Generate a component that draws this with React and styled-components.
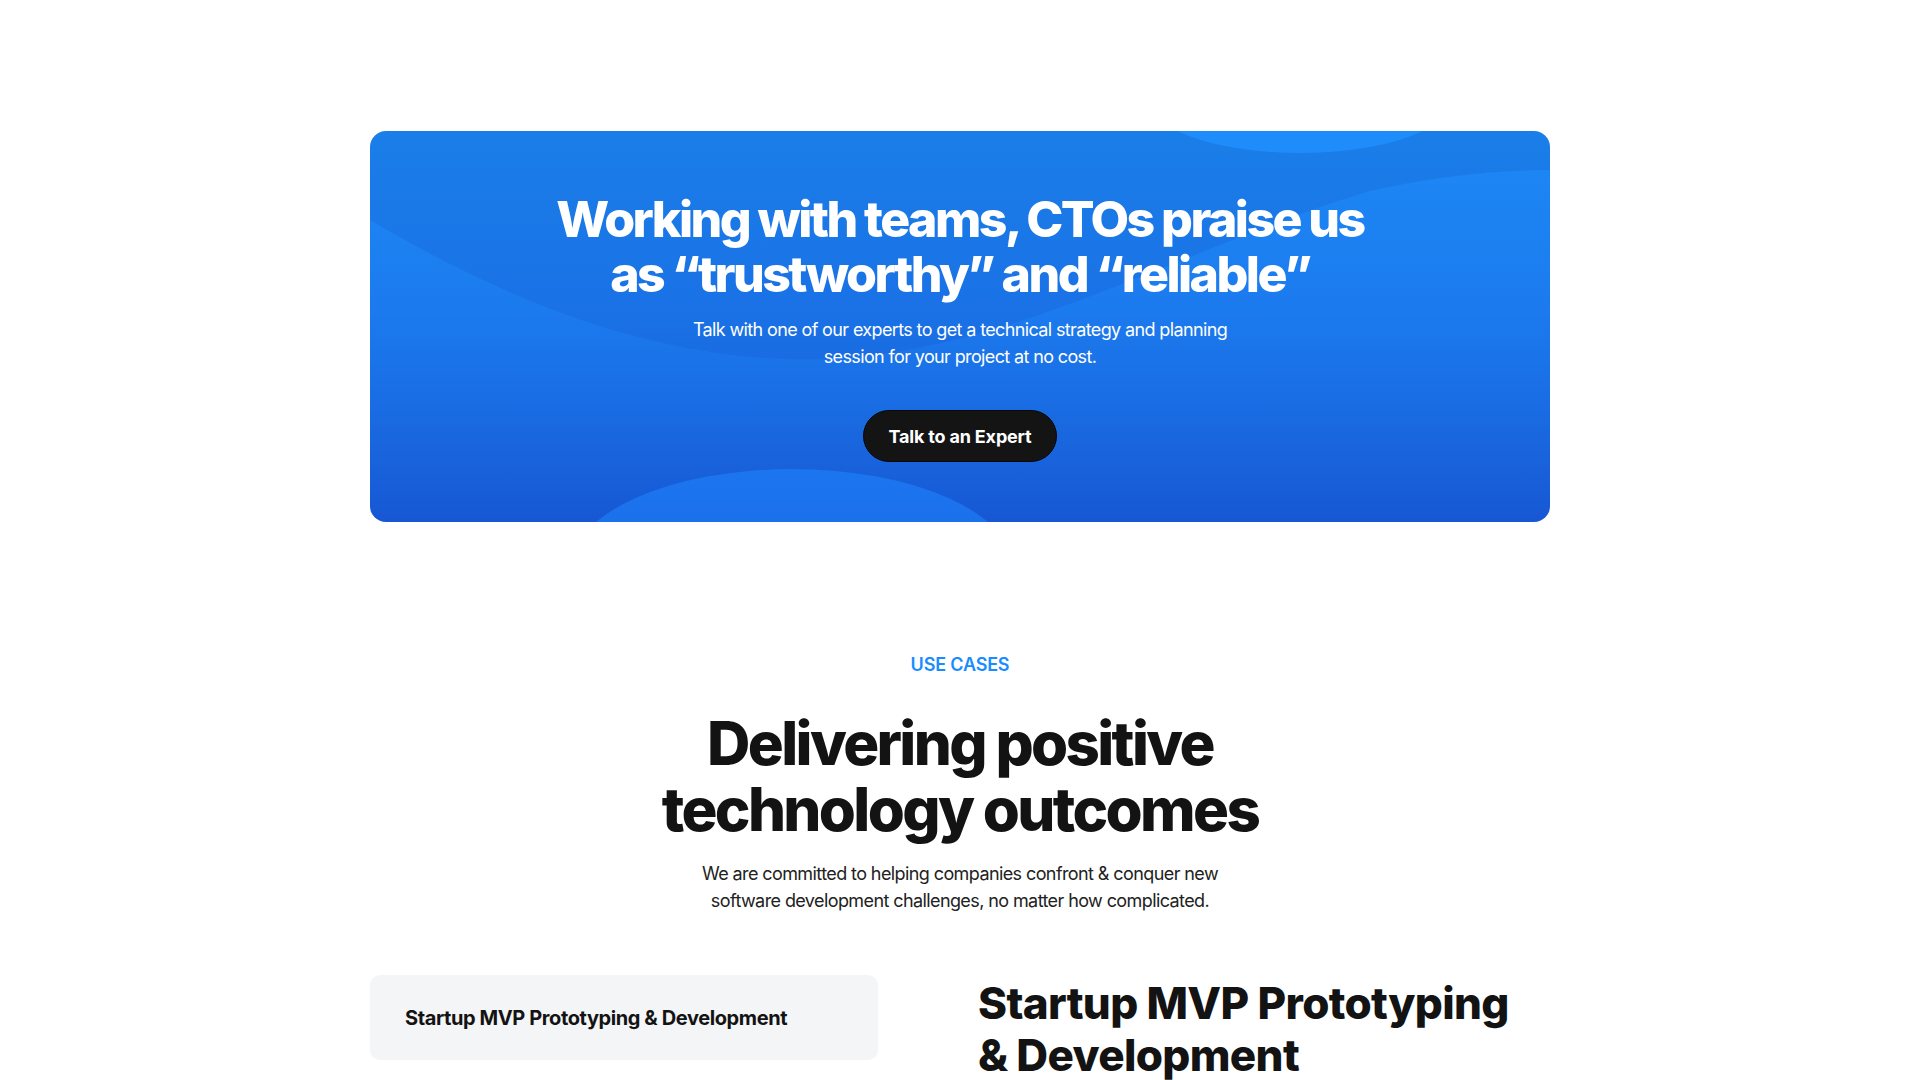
import React from 'react';
import styled, { createGlobalStyle } from 'styled-components';

const GlobalStyle = createGlobalStyle`
  * {
    box-sizing: border-box;
  }

  body {
    margin: 0;
    background: #ffffff;
    font-family: Inter, 'Noto Sans', 'Liberation Sans', sans-serif;
    color: #131313;
    -webkit-font-smoothing: antialiased;
  }
`;

const StyledPage = styled.main`
  display: flex;
  flex-direction: column;
  align-items: center;
  padding: 131px 0 0;
`;

const StyledBanner = styled.section`
  position: relative;
  overflow: hidden;
  width: 1180px;
  border-radius: 16px;
  background: linear-gradient(180deg, #1a7ee8 0%, #1a72e6 45%, #1757d4 100%);
  padding: 61px 0 60px;
  display: flex;
  flex-direction: column;
  align-items: center;
  text-align: center;
`;

const StyledWaves = styled.svg`
  position: absolute;
  inset: 0;
  width: 100%;
  height: 100%;
  pointer-events: none;
`;

const StyledBannerContent = styled.div`
  position: relative;
  display: flex;
  flex-direction: column;
  align-items: center;
`;

const StyledBannerTitle = styled.h2`
  margin: 0;
  font-size: 50px;
  line-height: 55px;
  font-weight: 800;
  letter-spacing: -0.051em;
  color: #ffffff;
  max-width: 840px;
`;

const StyledBannerText = styled.p`
  margin: 14px 0 0;
  max-width: 548px;
  font-size: 18px;
  line-height: 27px;
  font-weight: 400;
  letter-spacing: -0.035em;
  color: #ffffff;
`;

const StyledButton = styled.button`
  margin-top: 40px;
  height: 52px;
  padding: 0 24px;
  border-radius: 26px;
  border: 1px solid #060606;
  background: #141414;
  color: #ffffff;
  font-family: inherit;
  font-size: 18px;
  font-weight: 700;
  letter-spacing: -0.01em;
  cursor: pointer;
`;

const StyledUseCases = styled.section`
  width: 1180px;
  margin-top: 129px;
  display: flex;
  flex-direction: column;
  align-items: center;
  text-align: center;
`;

const StyledEyebrow = styled.span`
  font-size: 18px;
  line-height: 27px;
  font-weight: 600;
  letter-spacing: -0.01em;
  color: #1a8cff;
`;

const StyledHeading = styled.h2`
  margin: 32px 0 0;
  font-size: 60px;
  line-height: 66px;
  font-weight: 800;
  letter-spacing: -0.044em;
  max-width: 640px;
  color: #131313;
`;

const StyledLead = styled.p`
  margin: 18px 0 0;
  max-width: 528px;
  font-size: 18px;
  line-height: 27px;
  color: #222222;
  letter-spacing: -0.033em;
`;

const StyledCasesGrid = styled.div`
  width: 100%;
  margin-top: 61px;
  display: grid;
  grid-template-columns: 508px 1fr;
  column-gap: 100px;
  text-align: left;
`;

const StyledTabList = styled.div`
  display: flex;
  flex-direction: column;
  gap: 12px;
`;

const StyledTab = styled.button`
  height: 85px;
  padding: 0 35px;
  border: none;
  border-radius: 10px;
  background: ${({ $active }) => ($active ? '#f4f5f7' : 'transparent')};
  text-align: left;
  font-family: inherit;
  font-size: 20px;
  font-weight: 700;
  letter-spacing: -0.02em;
  color: #131313;
  cursor: pointer;
`;

const StyledCasePanel = styled.div`
  padding-top: 2px;
`;

const StyledCaseTitle = styled.h3`
  margin: 0;
  max-width: 540px;
  font-size: 44px;
  line-height: 52px;
  font-weight: 800;
  letter-spacing: -0.015em;
  color: #131313;
`;

const Waves = () => (
  <StyledWaves viewBox="0 0 1180 391" preserveAspectRatio="none" aria-hidden="true">
    <defs>
      <linearGradient id="waveFill" x1="0" y1="0" x2="0" y2="1">
        <stop offset="0" stopColor="#1f8dff" stopOpacity="0.55" />
        <stop offset="0.75" stopColor="#1f8dff" stopOpacity="0.12" />
        <stop offset="1" stopColor="#1f8dff" stopOpacity="0" />
      </linearGradient>
    </defs>
    <path
      d="M0,89 C120,160 260,222 414,228 C620,236 800,120 1000,60 C1080,42 1140,39 1180,39 L1180,391 L0,391 Z"
      fill="url(#waveFill)"
    />
    <ellipse cx="930" cy="-30" rx="150" ry="52" fill="#1f91ff" fillOpacity="0.8" />
    <ellipse cx="422" cy="438" rx="222" ry="100" fill="#1f86ff" fillOpacity="0.55" />
  </StyledWaves>
);

const App = () => (
  <>
    <GlobalStyle />
    <StyledPage>
      <StyledBanner>
        <Waves />
        <StyledBannerContent>
          <StyledBannerTitle>
            Working with teams, CTOs praise us as “trustworthy” and “reliable”
          </StyledBannerTitle>
          <StyledBannerText>
            Talk with one of our experts to get a technical strategy and planning session for your
            project at no cost.
          </StyledBannerText>
          <StyledButton type="button">Talk to an Expert</StyledButton>
        </StyledBannerContent>
      </StyledBanner>

      <StyledUseCases>
        <StyledEyebrow>USE CASES</StyledEyebrow>
        <StyledHeading>Delivering positive technology outcomes</StyledHeading>
        <StyledLead>
          We are committed to helping companies confront &amp; conquer new software development
          challenges, no matter how complicated.
        </StyledLead>
        <StyledCasesGrid>
          <StyledTabList>
            <StyledTab type="button" $active>
              Startup MVP Prototyping &amp; Development
            </StyledTab>
          </StyledTabList>
          <StyledCasePanel>
            <StyledCaseTitle>Startup MVP Prototyping &amp; Development</StyledCaseTitle>
          </StyledCasePanel>
        </StyledCasesGrid>
      </StyledUseCases>
    </StyledPage>
  </>
);

export default App;
